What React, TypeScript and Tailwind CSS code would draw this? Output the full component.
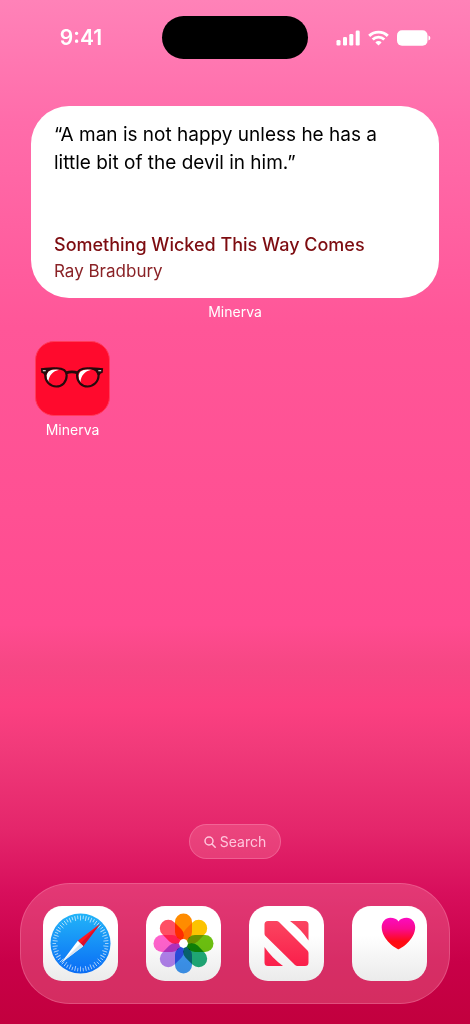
import type { ReactNode } from 'react'

const PETALS = [
  { angle: 0, color: '#ff8c00' },
  { angle: 45, color: '#fcc300' },
  { angle: 90, color: '#6cc010' },
  { angle: 135, color: '#20ab78' },
  { angle: 180, color: '#3d95f0' },
  { angle: 225, color: '#b282ee' },
  { angle: 270, color: '#ff62cc' },
  { angle: 315, color: '#ff4f64' },
]

const TICKS = Array.from({ length: 60 }, (_, i) => i * 6)

function SafariIcon() {
  return (
    <svg viewBox="0 0 75 75" className="size-full" aria-hidden="true">
      <defs>
        <linearGradient id="safari" x1="0" y1="0" x2="0" y2="1">
          <stop offset="0" stopColor="#22b4f8" />
          <stop offset="1" stopColor="#0a6cf5" />
        </linearGradient>
      </defs>
      <circle cx="37.5" cy="37.5" r="30" fill="url(#safari)" />
      {TICKS.map(a => (
        <path
          key={a}
          d={a % 12 === 0 ? 'M37.5 9.5v5' : 'M37.5 9.5v3.5'}
          stroke="#fff"
          strokeOpacity="0.65"
          strokeWidth="0.9"
          transform={`rotate(${a} 37.5 37.5)`}
        />
      ))}
      <path d="M57 18 34.8 34.8 40.2 40.2Z" fill="#ff1620" />
      <path d="M57 18 37.5 37.5 40.2 40.2Z" fill="#d80f2c" />
      <path d="M18 57 34.8 34.8 40.2 40.2Z" fill="#fff" />
      <path d="M18 57 37.5 37.5 40.2 40.2Z" fill="#d9e4f2" />
    </svg>
  )
}

function PhotosIcon() {
  return (
    <svg viewBox="0 0 75 75" className="size-full" aria-hidden="true">
      {PETALS.map(({ angle, color }) => (
        <rect
          key={angle}
          x="29"
          y="7.5"
          width="17"
          height="27"
          rx="8.5"
          fill={color}
          transform={`rotate(${angle} 37.5 37.5)`}
          className="mix-blend-multiply"
        />
      ))}
      <circle cx="37.5" cy="37.5" r="4.4" fill="#fff" />
    </svg>
  )
}

function NewsIcon() {
  return (
    <svg viewBox="0 0 75 75" className="size-full" aria-hidden="true">
      <defs>
        <linearGradient id="news" gradientUnits="userSpaceOnUse" x1="0" y1="15" x2="0" y2="60">
          <stop offset="0" stopColor="#fb4560" />
          <stop offset="1" stopColor="#fa1f4b" />
        </linearGradient>
      </defs>
      <g fill="url(#news)">
        <path d="M19 15h8.500q1.500 0 2.500 1L58.500 44.500q1 1 1 2.500v9.500q0 3.500-3.500 3.500h-7.500q-1.500 0-2.500-1L16.500 30q-1-1-1-2.500v-9q0-3.500 3.500-3.500Z" />
        <path d="M41 15h15q3.500 0 3.500 3.500V34.500Q52 23 41 15Z" />
        <path d="M15.500 41Q23 52 34 60H19q-3.500 0-3.500-3.500Z" />
      </g>
    </svg>
  )
}

function HealthIcon() {
  return (
    <svg viewBox="0 0 75 75" className="size-full" aria-hidden="true">
      <defs>
        <linearGradient id="health" x1="0" y1="0" x2="0" y2="1">
          <stop offset="0" stopColor="#fb0bc0" />
          <stop offset="0.35" stopColor="#f90a90" />
          <stop offset="0.75" stopColor="#ff0a14" />
          <stop offset="1" stopColor="#ff1010" />
        </linearGradient>
      </defs>
      <path
        d="M46.500 43.300C45 43.300 29.700 34 29.700 21.300 29.700 15.500 33.600 11.700 38.300 11.700 42 11.700 45 13 46.500 15.400 48 13 51 11.700 54.700 11.700 59.400 11.700 63.200 15.500 63.200 21.300 63.200 34 48 43.300 46.500 43.300Z"
        fill="url(#health)"
      />
    </svg>
  )
}

function GlassesIcon() {
  return (
    <svg viewBox="0 0 75 75" className="size-full" aria-hidden="true">
      <path d="M11 37C10 30 15 27.500 24 28.500 17 30 13.500 34 12.500 41.500Q11 40 11 37Z" fill="#fff" />
      <path d="M44 37C43 30 48 27.500 57 28.500 50 30 46.500 34 45.500 41.500Q44 40 44 37Z" fill="#fff" />
      <g fill="none" stroke="#240a0c" strokeWidth="2.200">
        <path d="M9.500 34C9.500 29 14 27 21 27S31.500 29.500 31.500 34.500C31.500 41 27 45.700 20.800 45.700S9.500 41 9.500 34Z" />
        <path d="M42.200 34.500C42.200 29.500 46 27 53 27S64.300 29 64.300 34C64.300 41 59 45.700 53 45.700S42.200 41 42.200 34.500Z" />
        <path d="M31 31.700Q36.900 29.500 42.800 31.700" strokeWidth="2.800" />
      </g>
      <path d="M5 27Q10 26.400 14 26.300H20L13 29.500 10.500 34H8.500Q8 32 5.500 31.500Z" fill="#240a0c" />
      <path d="M69 27Q64 26.400 60 26.300H54L61 29.500 63.500 34H65.500Q66 32 68.500 31.500Z" fill="#240a0c" />
      <path d="M7 29.500h3M64 29.500h3" stroke="#fff" strokeWidth="1.200" />
    </svg>
  )
}

function StatusIcons() {
  return (
    <div className="flex items-center gap-2 pr-3 text-white">
      <svg viewBox="0 0 24 16" fill="currentColor" className="h-4 w-6" aria-hidden="true">
        <rect x="0.500" y="10" width="4" height="5.500" rx="1.300" />
        <rect x="7" y="7" width="4" height="8.500" rx="1.300" />
        <rect x="13.300" y="4" width="4" height="11.500" rx="1.300" />
        <rect x="19.700" y="0.500" width="4" height="15" rx="1.300" />
      </svg>
      <svg viewBox="0 0 21 16" fill="none" stroke="currentColor" strokeWidth="2.900" className="h-4 w-[21px]" aria-hidden="true">
        <path d="M1.200 5.900a13.400 13.400 0 0 1 18.600 0" />
        <path d="M4.700 9.500a8.300 8.300 0 0 1 11.600 0" />
        <path d="M10.500 15.500 7.400 12.400a4.400 4.400 0 0 1 6.200 0Z" fill="currentColor" stroke="none" />
      </svg>
      <svg viewBox="0 0 34 16" fill="currentColor" className="h-4 w-[34px]" aria-hidden="true">
        <rect x="0" y="0.300" width="30.500" height="15.500" rx="5" />
        <path d="M31.500 5.500q1.900.700 1.900 2.500t-1.900 2.500Z" />
      </svg>
    </div>
  )
}

const DOCK: Array<{ name: string; icon: ReactNode }> = [
  { name: 'Safari', icon: <SafariIcon /> },
  { name: 'Photos', icon: <PhotosIcon /> },
  { name: 'News', icon: <NewsIcon /> },
  { name: 'Health', icon: <HealthIcon /> },
]

export default function App() {
  return (
    <div className="flex min-h-screen flex-col bg-[linear-gradient(180deg,#ff82b8_0%,#ff6caa_12%,#ff5698_32%,#ff5093_50%,#ff4b90_61%,#f64784_65%,#fb4081_69%,#f13a7a_73%,#e4266b_81%,#d80f5c_87%,#c80048_94%,#c2003e_100%)] font-['Inter',sans-serif]">
      <header className="grid grid-cols-[1fr_146px_1fr] items-center justify-items-center pt-4">
        <time className="text-[21px] leading-7 font-semibold text-white">9:41</time>
        <div className="h-[43px] w-full rounded-full bg-black" />
        <StatusIcons />
      </header>

      <main className="flex grow flex-col pt-[47px]">
        <section className="mx-[31px]">
          <article className="flex h-48 flex-col justify-between rounded-[38px] bg-white px-[23px] pt-[15px] pb-[14px]">
            <p className="text-[19px] leading-7 text-black">“A man is not happy unless he has a little bit of the devil in him.”</p>
            <div className="leading-[26px]">
              <h2 className="text-lg leading-[26px] font-medium text-[#7d0c10]">Something Wicked This Way Comes</h2>
              <p className="text-[17px] leading-[26px] text-[#8a2226]">Ray Bradbury</p>
            </div>
          </article>
          <p className="mt-1 text-center text-sm leading-5 text-white">Minerva</p>
        </section>

        <div className="mt-[19px] flex px-[35px]">
          <button type="button" className="flex flex-col items-center gap-1 text-sm leading-5 text-white">
            <span className="size-[75px] overflow-hidden rounded-[19px] border border-[#ff3b5c] bg-[#ff0a2d]">
              <GlassesIcon />
            </span>
            Minerva
          </button>
        </div>

        <button
          type="button"
          className="mx-auto mt-auto mb-6 flex h-[35px] items-center gap-1 rounded-full border border-[#ff9fc0]/35 bg-[#ffa0b4]/25 px-3.5 text-sm text-[#ffc6dc]"
        >
          <svg viewBox="0 0 12 12" fill="none" stroke="currentColor" strokeWidth="1.500" strokeLinecap="round" className="size-3" aria-hidden="true">
            <circle cx="5" cy="5" r="4" />
            <path d="m8 8 3.200 3.200" />
          </svg>
          Search
        </button>
      </main>

      <nav className="mx-5 mb-5 flex h-[121px] items-center justify-between rounded-[50px] border border-[#ff9fc0]/30 bg-[#ffa0b4]/28 px-[22px]">
        {DOCK.map(({ name, icon }) => (
          <button
            key={name}
            type="button"
            aria-label={name}
            className="size-[75px] overflow-hidden rounded-[19px] bg-linear-to-b from-white from-40% to-[#ebebeb]"
          >
            {icon}
          </button>
        ))}
      </nav>
    </div>
  )
}
